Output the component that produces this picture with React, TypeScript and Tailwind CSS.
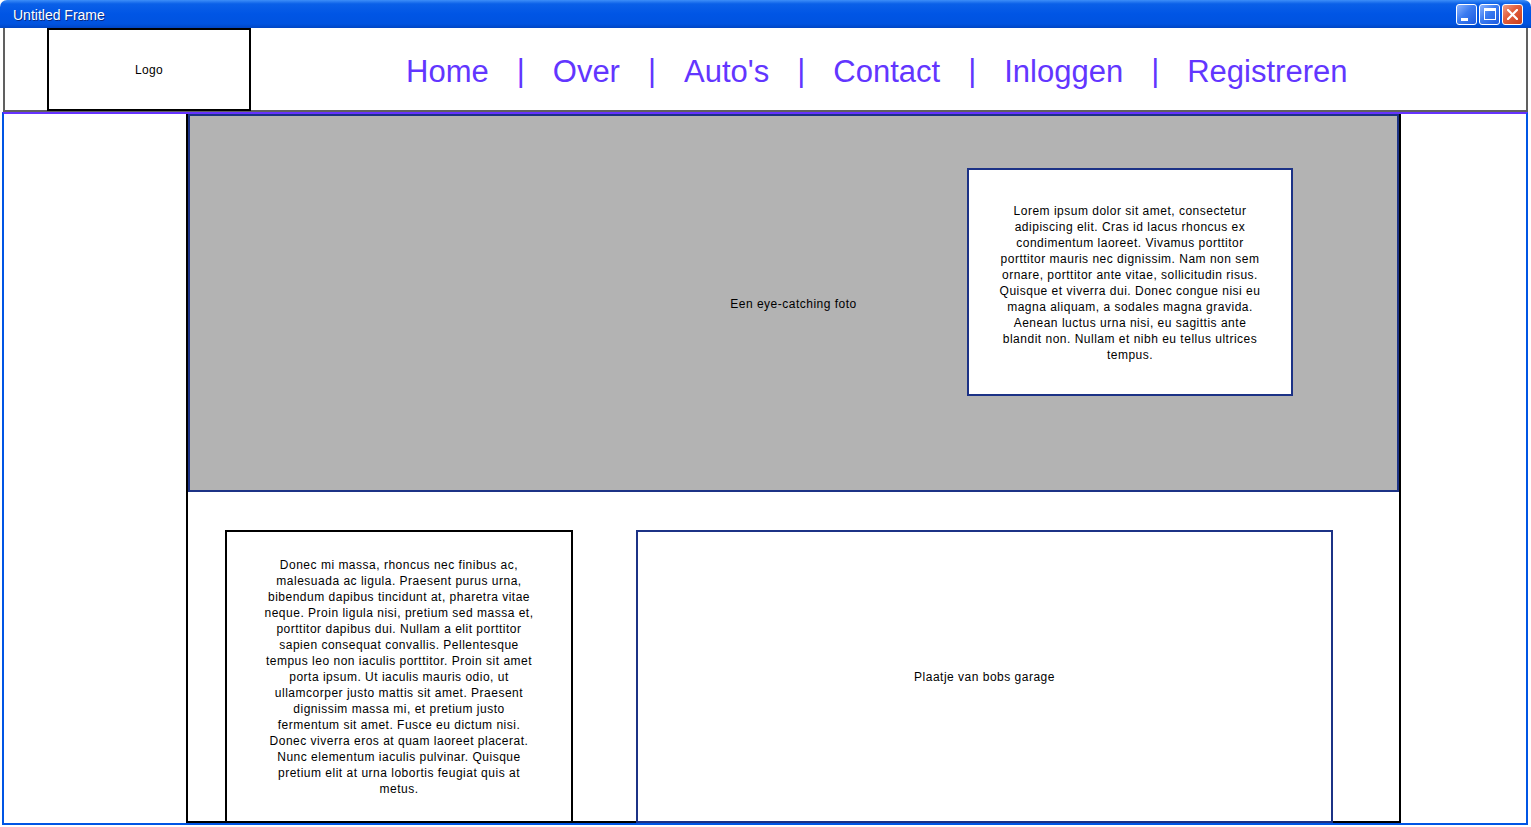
import React from "react";

const navItems = ["Home", "Over", "Auto's", "Contact", "Inloggen", "Registreren"];

const heroText =
  "Lorem ipsum dolor sit amet, consectetur adipiscing elit. Cras id lacus rhoncus ex condimentum laoreet. Vivamus porttitor porttitor mauris nec dignissim. Nam non sem ornare, porttitor ante vitae, sollicitudin risus. Quisque et viverra dui. Donec congue nisi eu magna aliquam, a sodales magna gravida. Aenean luctus urna nisi, eu sagittis ante blandit non. Nullam et nibh eu tellus ultrices tempus.";

const sideText =
  "Donec mi massa, rhoncus nec finibus ac, malesuada ac ligula. Praesent purus urna, bibendum dapibus tincidunt at, pharetra vitae neque. Proin ligula nisi, pretium sed massa et, porttitor dapibus dui. Nullam a elit porttitor sapien consequat convallis. Pellentesque tempus leo non iaculis porttitor. Proin sit amet porta ipsum. Ut iaculis mauris odio, ut ullamcorper justo mattis sit amet. Praesent dignissim massa mi, et pretium justo fermentum sit amet. Fusce eu dictum nisi. Donec viverra eros at quam laoreet placerat. Nunc elementum iaculis pulvinar. Quisque pretium elit at urna lobortis feugiat quis at metus.";

function TitleButtons() {
  return (
    <div className="flex gap-[2px] pr-[8px]">
      {/* minimize */}
      <div className="w-[21px] h-[21px] rounded-[3px] border border-white bg-[linear-gradient(135deg,#8cb4ff_0%,#3b7bf0_45%,#1c5ae0_100%)] flex items-end pl-[4px] pb-[3px]">
        <div className="w-[7px] h-[3px] bg-white" />
      </div>
      {/* maximize */}
      <div className="w-[21px] h-[21px] rounded-[3px] border border-white bg-[linear-gradient(135deg,#8cb4ff_0%,#3b7bf0_45%,#1c5ae0_100%)] flex items-center justify-center">
        <div className="w-[12px] h-[12px] border border-white border-t-[3px]" />
      </div>
      {/* close */}
      <div className="w-[21px] h-[21px] rounded-[3px] border border-white bg-[linear-gradient(135deg,#f0a08a_0%,#e2613f_40%,#cc3d1a_100%)] flex items-center justify-center">
        <svg width="11" height="11" viewBox="0 0 11 11">
          <path d="M1 1 L10 10 M10 1 L1 10" stroke="white" strokeWidth="2.2" strokeLinecap="square" />
        </svg>
      </div>
    </div>
  );
}

export default function App() {
  return (
    <div className="w-[1531px] h-[827px] bg-white overflow-hidden flex flex-col font-['Liberation_Sans',Arial,sans-serif] text-black">
      {/* Window title bar */}
      <div className="h-[28px] shrink-0 rounded-t-[7px] bg-[linear-gradient(to_bottom,#3d8ef8_0%,#0a60e8_14%,#0055e5_50%,#0053e0_85%,#0046c4_100%)] flex items-center justify-between">
        <span className="pl-[13px] pt-[3px] text-white text-[14px] [text-shadow:1px_1px_0_#0a2a80]">Untitled Frame</span>
        <TitleButtons />
      </div>

      {/* Window body */}
      <div className="flex flex-col pl-[2px] pr-[3px]">
        {/* Header */}
        <header className="h-[84px] shrink-0 ml-[1px] border-x-2 border-b-2 border-[#606060] flex items-stretch">
          <div className="ml-[42px] w-[204px] h-[83px] border-2 border-black bg-white flex items-center justify-center text-[12px] tracking-[0.3px]">
            Logo
          </div>
          <nav className="ml-[155px] pt-[5px] flex items-center gap-[28px] text-[31px] text-[#6236ff]">
            {navItems.map((item, i) => (
              <React.Fragment key={item}>
                {i > 0 && <span>|</span>}
                <a href="#" className="leading-none">{item}</a>
              </React.Fragment>
            ))}
          </nav>
        </header>

        {/* Content frame */}
        <div className="h-[713px] border-2 border-[#0055e5] border-t-[#6633ff] flex">
          <div className="ml-[182px] w-[1215px] border-x-2 border-b-2 border-black flex flex-col">
            {/* Hero photo */}
            <div className="relative h-[378px] shrink-0 bg-[#b3b3b3] border-2 border-[#1c3286] flex items-center justify-center text-[12px] tracking-[0.5px]">
              <span className="pt-[2px]">Een eye-catching foto</span>
              <div className="absolute left-[777px] top-[52px] w-[326px] h-[228px] bg-white border-2 border-[#1c3286] flex items-center justify-center">
                <p className="w-[268px] pt-[2px] text-center text-[12px] leading-[16px]">{heroText}</p>
              </div>
            </div>

            {/* Lower section */}
            <div className="flex-1 flex pt-[38px] -mb-[2px] tracking-[0.5px]">
              <div className="ml-[37px] w-[348px] border-2 border-black bg-white flex items-center justify-center">
                <p className="w-[274px] text-center text-[12px] leading-[16px]">{sideText}</p>
              </div>
              <div className="ml-[63px] w-[697px] border-2 border-[#1c3286] bg-white flex items-center justify-center text-[12px]">
                Plaatje van bobs garage
              </div>
            </div>
          </div>
        </div>
      </div>
    </div>
  );
}
